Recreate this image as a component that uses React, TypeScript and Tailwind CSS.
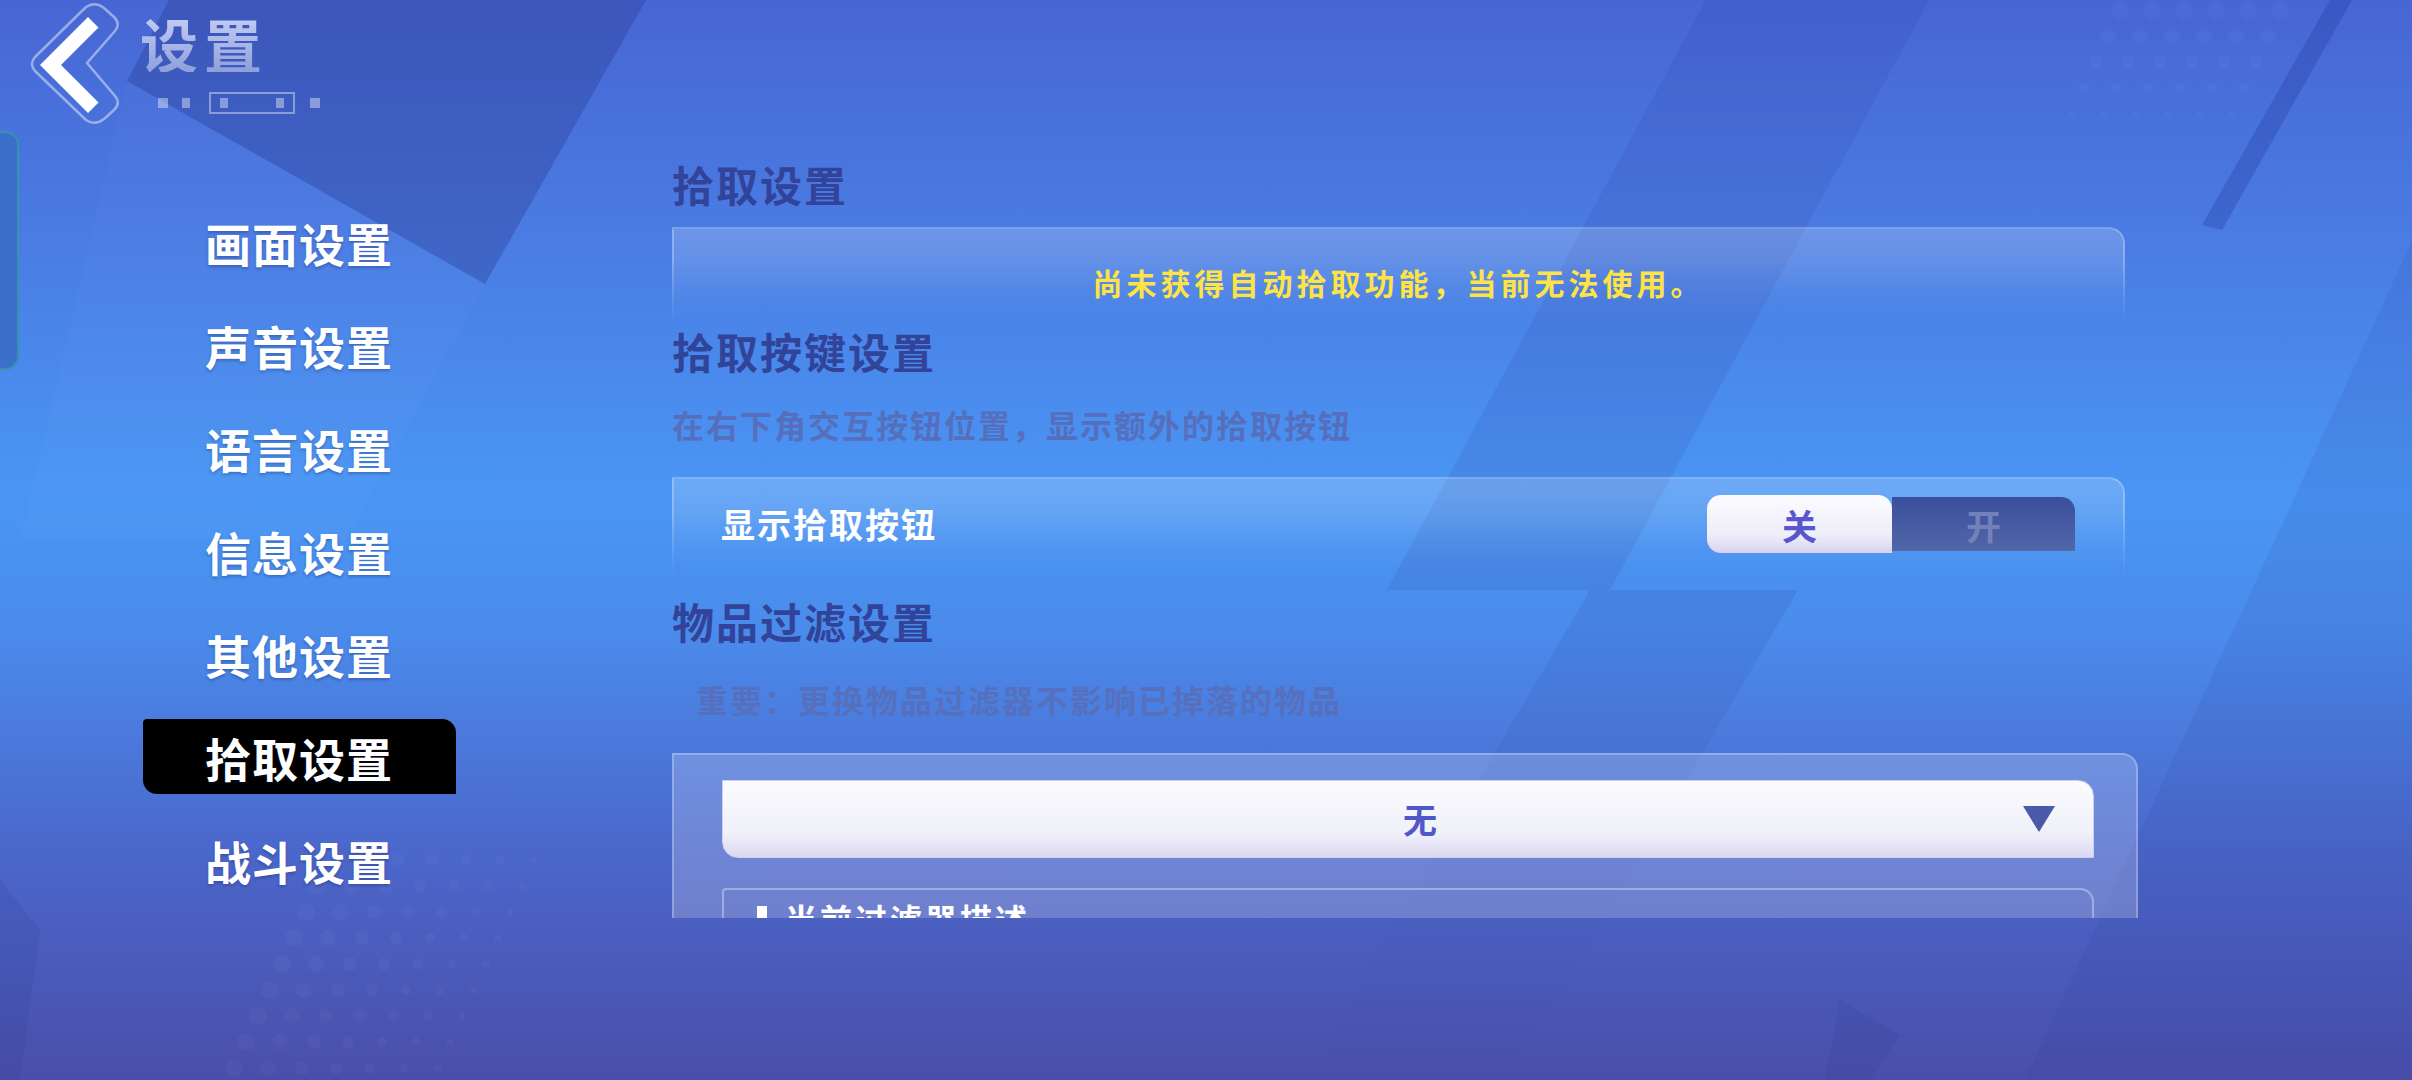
import React from "react";

const menuItems = ["画面设置", "声音设置", "语言设置", "信息设置", "其他设置", "拾取设置", "战斗设置"];
const activeIndex = 5;

// faint halftone dots in the backdrop
const dotsBottom: { x: number; y: number; r: number }[] = [];
for (let row = 0; row < 9; row++) {
  for (let col = 0; col < 7; col++) {
    dotsBottom.push({ x: 330 + col * 34 - row * 12, y: 860 + row * 26, r: 9 - col * 0.9 });
  }
}
const dotsTop: { x: number; y: number; r: number }[] = [];
for (let row = 0; row < 5; row++) {
  for (let col = 0; col < 6; col++) {
    dotsTop.push({ x: 2120 + col * 32 - row * 12, y: 10 + row * 26, r: 9 - row * 1.2 });
  }
}

function Backdrop() {
  return (
    <svg className="absolute inset-0 pointer-events-none" width="2412" height="1080" viewBox="0 0 2412 1080">
      <defs>
        <linearGradient id="stripeFade" x1="0" y1="0" x2="0" y2="1">
          <stop offset="0" stopColor="#2a3a90" stopOpacity="0.14" />
          <stop offset="0.6" stopColor="#2a3a90" stopOpacity="0.04" />
          <stop offset="1" stopColor="#2a3a90" stopOpacity="0" />
        </linearGradient>
      </defs>
      <polygon points="169,0 646,0 485,284 127,81" fill="#2a3a90" opacity="0.35" />
      <polygon points="127,81 485,284 346,540 20,540" fill="#ffffff" opacity="0.02" />
      <polygon points="1706,0 1929,0 1610,590 1387,590" fill="#2a3a90" opacity="0.12" />
      <polygon points="1590,590 1798,590 1511,1080 1303,1080" fill="url(#stripeFade)" />
      <polygon points="2330,0 2352,0 2222,230 2202,225" fill="#22399a" opacity="0.3" />
      <polygon points="2412,241 2412,1080 2025,1080 2275,540" fill="#2a3a90" opacity="0.1" />
      <polygon points="0,880 40,930 20,1080 0,1080" fill="#2a3a90" opacity="0.15" />
      <polygon points="1840,1000 1900,1035 1870,1080 1825,1080" fill="#2a3a90" opacity="0.15" />
      {dotsBottom.map((d, i) => (
        <circle key={i} cx={d.x} cy={d.y} r={d.r} fill="#ffffff" opacity="0.03" />
      ))}
      {dotsTop.map((d, i) => (
        <circle key={"t" + i} cx={d.x} cy={d.y} r={d.r} fill="#ffffff" opacity="0.03" />
      ))}
    </svg>
  );
}

function Header() {
  return (
    <div className="flex h-[130px] items-start">
      <svg width="130" height="130" viewBox="0 0 130 130" className="shrink-0">
        <path
          d="M86 7 Q95 1 104 8 L114 17 Q121 24 115 31 L87 63 L115 96 Q121 103 114 110 L104 119 Q95 126 86 120 L35 71 Q29 64 35 57 Z"
          fill="none"
          stroke="#ffffff"
          strokeOpacity="0.45"
          strokeWidth="2.5"
          strokeLinejoin="round"
        />
        <polygon points="88,17 98.5,27.5 61,65 98.5,102.5 88,113 40,65" fill="#ffffff" />
      </svg>
      <div className="ml-[10px] flex flex-col pt-[14px]">
        <span className="bg-[linear-gradient(180deg,#c6cff4,#8e9fda)] bg-clip-text text-[58px] leading-none font-bold tracking-[6px] text-transparent">
          设置
        </span>
        <div className="mt-[20px] ml-[18px] flex items-center">
          <span className="h-[10px] w-[10px] bg-white/40" />
          <span className="ml-[14px] h-[10px] w-[8px] bg-white/40" />
          <div className="ml-[19px] flex h-[22px] w-[86px] items-center justify-between border-2 border-white/40 px-[9px]">
            <span className="h-[10px] w-[8px] bg-white/40" />
            <span className="h-[10px] w-[8px] bg-white/40" />
          </div>
          <span className="ml-[15px] h-[10px] w-[10px] bg-white/40" />
        </div>
      </div>
    </div>
  );
}

function SectionTitle({ text, className }: { text: string; className?: string }) {
  return (
    <>
      <h2 className={"text-[42px] leading-none font-bold tracking-[2px] text-[#32439a] " + (className ?? "")}>{text}</h2>
      <div className="mt-[14px] h-[2px] bg-[#2f4ca6]/75" />
    </>
  );
}

// translucent panel whose frame and fill fade out toward the bottom
function FadePanel() {
  return (
    <div className="absolute inset-0 rounded-tr-[16px] border-x-2 border-t-2 border-white/25 bg-[linear-gradient(180deg,rgba(255,255,255,0.2),rgba(255,255,255,0.04))] [mask-image:linear-gradient(180deg,#000_35%,transparent_100%)]" />
  );
}

export default function App() {
  return (
    <div className="relative h-[1080px] w-[2412px] overflow-hidden bg-[linear-gradient(180deg,#4766d4_0%,#4a7ee4_24%,#4a96f4_46%,#4a8cec_58%,#4b68cc_78%,#4a4eaa_100%)] font-['Noto_Sans_CJK_SC','Noto_Sans',sans-serif]">
      <Backdrop />
      <div className="absolute top-[131px] left-0 h-[239px] w-[19px] rounded-r-[14px] border-2 border-l-0 border-[#35a39c]/70 bg-[#3c6fc9]" />

      <div className="relative flex h-full">
        <aside className="flex w-[672px] shrink-0 flex-col">
          <Header />
          <nav className="mt-[60px] flex flex-col pl-[143px]">
            {menuItems.map((item, index) => (
              <div key={index} className="flex h-[103px] items-center">
                <div
                  className={
                    index === activeIndex
                      ? "flex h-[75px] w-[313px] items-center rounded-tl-[4px] rounded-tr-[14px] rounded-bl-[14px] bg-black pl-[62px]"
                      : "flex h-[75px] w-[313px] items-center pl-[62px]"
                  }
                >
                  <span className="text-[46px] leading-none font-bold tracking-[1px] text-white [text-shadow:0_2px_3px_rgba(20,30,90,0.3)]">
                    {item}
                  </span>
                </div>
              </div>
            ))}
          </nav>
        </aside>

        <main className="mt-[150px] flex h-[768px] w-[1469px] flex-col overflow-hidden">
          <SectionTitle text="拾取设置" className="mt-[13px]" />
          <div className="relative mt-[8px] mr-[16px] flex h-[98px] shrink-0 items-center justify-center pt-[12px]">
            <FadePanel />
            <p className="relative text-[30px] leading-none font-bold tracking-[4px] text-[#fde344]">
              尚未获得自动拾取功能，当前无法使用。
            </p>
          </div>

          <SectionTitle text="拾取按键设置" className="mt-[5px]" />
          <p className="mt-[22px] text-[32px] leading-none font-bold tracking-[2px] text-[#566fbd]">
            在右下角交互按钮位置，显示额外的拾取按钮
          </p>
          <div className="relative mt-[37px] mr-[16px] flex h-[100px] shrink-0 items-start justify-between pt-[18px] pr-[50px] pl-[49px]">
            <FadePanel />
            <div className="relative flex h-[58px] items-center">
              <span className="text-[34px] leading-none font-bold tracking-[2px] text-white">显示拾取按钮</span>
            </div>
            <div className="relative flex h-[58px] items-center">
              <div className="relative z-10 flex h-[58px] w-[185px] items-center justify-center rounded-tl-[14px] rounded-tr-[14px] rounded-bl-[14px] bg-[linear-gradient(180deg,#fbfbff_0%,#eeedf9_70%,#d8d2ee_100%)]">
                <span className="text-[35px] leading-none font-bold text-[#5858cc]">关</span>
              </div>
              <div className="flex h-[54px] w-[183px] items-center justify-center rounded-tr-[14px] bg-[linear-gradient(180deg,#3a4e9e,#5267a8)]">
                <span className="text-[35px] leading-none font-bold text-[#7282b8]">开</span>
              </div>
            </div>
          </div>

          <SectionTitle text="物品过滤设置" className="mt-[23px]" />
          <p className="mt-[27px] pl-[24px] text-[32px] leading-none font-bold tracking-[2px] text-[#5670bd]">
            重要：更换物品过滤器不影响已掉落的物品
          </p>
          <div className="mt-[38px] mr-[3px] flex shrink-0 flex-col rounded-tr-[16px] border-x-2 border-t-2 border-white/25 bg-white/20 pt-[25px] pr-[42px] pl-[48px]">
            <div className="flex h-[78px] items-center rounded-tr-[16px] rounded-bl-[16px] border border-[#c9d0f4] bg-[linear-gradient(180deg,#fbfbff_0%,#f0f0fa_70%,#dcd8f0_100%)] pr-[38px] pl-[94px]">
              <span className="flex-1 text-center text-[34px] leading-none font-bold text-[#5058c8]">无</span>
              <svg width="32" height="26" viewBox="0 0 32 26">
                <polygon points="0,0 32,0 16,26" fill="#4a5aa8" />
              </svg>
            </div>
            <div className="mt-[30px] flex h-[120px] items-start rounded-tl-[4px] rounded-tr-[14px] border-x-2 border-t-2 border-white/35 pt-[12px] pl-[33px]">
              <span className="mt-[4px] h-[30px] w-[10px] bg-white" />
              <span className="ml-[18px] text-[32px] leading-none font-bold tracking-[3px] text-white">当前过滤器描述</span>
            </div>
          </div>
        </main>
      </div>
    </div>
  );
}
